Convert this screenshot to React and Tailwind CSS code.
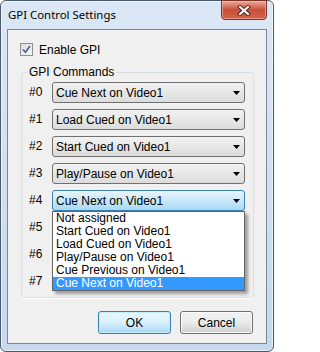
import React from 'react'

const rows = [
  'Cue Next on Video1',
  'Load Cued on Video1',
  'Start Cued on Video1',
  'Play/Pause on Video1',
  'Cue Next on Video1',
  '',
  '',
  '',
]

const options = [
  'Not assigned',
  'Start Cued on Video1',
  'Load Cued on Video1',
  'Play/Pause on Video1',
  'Cue Previous on Video1',
  'Cue Next on Video1',
]

const Arrow = () => (
  <svg width="7" height="4" viewBox="0 0 7 4" className="shrink-0">
    <path d="M0 0h7L3.5 4z" fill="#000" />
  </svg>
)

const Combo = ({ value, focused, open }) => (
  <div className="relative">
    <div
      className={
        focused
          ? 'flex h-[21px] w-[193px] items-center justify-between rounded-[3px] border border-[#3c7fb1] bg-gradient-to-b from-[#eaf6fd] to-[#a7d9f5] pl-[3px] pr-[4px]'
          : 'flex h-[21px] w-[193px] items-center justify-between rounded-[3px] border border-[#707070] bg-gradient-to-b from-[#f2f2f2] to-[#dcdcdc] pl-[3px] pr-[4px]'
      }
    >
      <span className="truncate">{value}</span>
      <Arrow />
    </div>
    {open && (
      <ul className="absolute left-0 top-full z-10 w-[193px] border border-[#646464] bg-white shadow-[3px_3px_3px_rgba(0,0,0,0.35)]">
        {options.map((o, i) => (
          <li
            key={i}
            className={
              i === options.length - 1
                ? 'h-[13px] bg-[#3399ff] pl-[3px] leading-[13px] text-white'
                : 'h-[13px] pl-[3px] leading-[13px]'
            }
          >
            {o}
          </li>
        ))}
      </ul>
    )}
  </div>
)

const Button = ({ children, primary }) => (
  <button
    className={
      primary
        ? 'h-[23px] w-[73px] rounded-[3px] border border-[#3c7fb1] bg-gradient-to-b from-[#eaf6fd] via-[#d9f0fc] to-[#a7d9f5] shadow-[inset_0_0_0_1px_#c6ecff]'
        : 'h-[23px] w-[73px] rounded-[3px] border border-[#707070] bg-gradient-to-b from-[#f2f2f2] via-[#ebebeb] to-[#cfcfcf] shadow-[inset_0_0_0_1px_#fcfcfc]'
    }
  >
    {children}
  </button>
)

export default function App() {
  return (
    <div className="flex h-[352px] w-[274px] flex-col rounded-[6px] border border-[#4a5a6c] bg-gradient-to-b from-[#dbe7f5] to-[#c6d8ee] px-[6px] pb-[7px] shadow-[inset_0_0_0_1px_rgba(255,255,255,0.6)]">
      <div className="flex h-[28px] shrink-0 items-start justify-between">
        <span className="self-center pl-[1px] text-[11.4px] text-black [font-family:'Noto_Sans',sans-serif]">
          GPI Control Settings
        </span>
        <div className="-mt-px flex h-[20px] w-[46px] items-center justify-center rounded-b-[4px] border border-[#7d3327] bg-gradient-to-b from-[#e9a99b] via-[#c74f38] to-[#d4634a] shadow-[inset_0_0_0_1px_rgba(255,200,190,0.5)]">
          <svg width="14" height="11" viewBox="0 0 14 11">
            <path d="M3 2l8 7M11 2l-8 7" stroke="#4a2a26" strokeWidth="4" strokeLinecap="square" />
            <path d="M3 2l8 7M11 2l-8 7" stroke="#fff" strokeWidth="2" strokeLinecap="square" />
          </svg>
        </div>
      </div>
      <div className="flex flex-1 flex-col border border-[#7a8898] bg-[#f0f0f0] text-[12px] text-black [font-family:'Liberation_Sans',Arial,sans-serif]">
        <label className="ml-[12px] mt-[13px] flex h-[13px] items-center gap-[6px]">
          <span className="flex h-[13px] w-[13px] items-center justify-center border border-[#8e8f8f] bg-gradient-to-br from-[#dcdcdc] to-[#f8f8f8]">
            <svg width="9" height="9" viewBox="0 0 9 9">
              <path d="M1 4.5l2.5 2.8L8 1" fill="none" stroke="#4e5f8f" strokeWidth="1.6" />
            </svg>
          </span>
          <span>Enable GPI</span>
        </label>
        <fieldset className="ml-[13px] mt-[10px] w-[233px] rounded-[3px] border border-[#d5dfe5] pb-[5px] pl-[5px] pr-[8px] pt-[3px] shadow-[0_1px_0_#fff]">
          <legend className="px-[2px] leading-[13px]">GPI Commands</legend>
          <div className="flex flex-col gap-[6px] pl-[2px]">
            {rows.map((r, i) => (
              <div key={i} className="flex h-[21px] items-center">
                <span className="w-[23px] -mt-px">#{i}</span>
                {i < 5 && <Combo value={r} focused={i === 4} open={i === 4} />}
              </div>
            ))}
          </div>
        </fieldset>
        <div className="mt-[13px] flex justify-end gap-[9px] pr-[13px]">
          <Button primary>OK</Button>
          <Button>Cancel</Button>
        </div>
      </div>
    </div>
  )
}
